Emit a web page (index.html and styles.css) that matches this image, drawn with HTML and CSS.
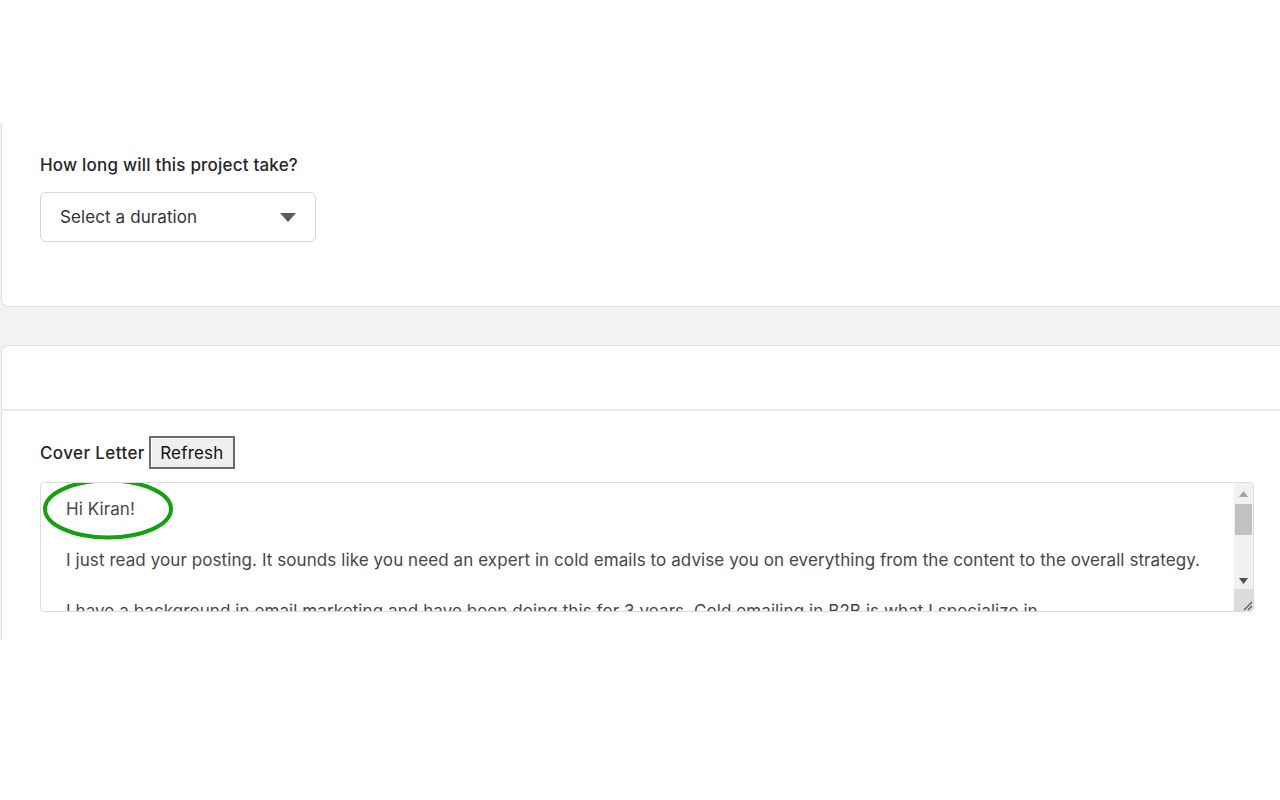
FILE: index.html
```html
<!DOCTYPE html>
<html lang="en">
<head>
<meta charset="utf-8">
<title>Proposal</title>
<link rel="stylesheet" href="styles.css">
</head>
<body>
<div class="top-space"></div>
<div class="viewport">
  <section class="card card-duration">
    <div class="field-label">How long will this project take?</div>
    <div class="select">
      <span class="select-text">Select a duration</span>
      <svg class="caret" width="18" height="11" viewBox="0 0 18 11"><path d="M1 1h16L9 10z" fill="#5c5c5c"/></svg>
    </div>
  </section>
  <section class="card card-letter">
    <div class="card-header"></div>
    <div class="card-body">
      <div class="letter-row">
        <span class="field-label inline">Cover Letter</span>
        <button class="refresh" type="button">Refresh</button>
      </div>
      <div class="textarea">
        <div class="ta-content">
          <p>Hi Kiran!</p>
          <p>&nbsp;</p>
          <p>I just read your posting. It sounds like you need an expert in cold emails to advise you on everything from the content to the overall strategy.</p>
          <p>&nbsp;</p>
          <p>I have a background in email marketing and have been doing this for 3 years. Cold emailing in B2B is what I specialize in.</p>
        </div>
        <div class="scrollbar">
          <div class="sb-btn"><svg width="9" height="6" viewBox="0 0 9 6"><path d="M0 6L4.5 0L9 6z" fill="#a3a3a3"/></svg></div>
          <div class="sb-track"><div class="sb-thumb"></div></div>
          <div class="sb-btn"><svg width="9" height="6" viewBox="0 0 9 6"><path d="M0 0h9L4.5 6z" fill="#505050"/></svg></div>
          <div class="sb-resizer"><svg width="12" height="12" viewBox="0 0 12 12"><path d="M11 3L3 11M11 7L7 11" stroke="#555" stroke-width="1.2"/></svg></div>
        </div>
        <svg class="circle" width="134" height="64" viewBox="0 0 134 64"><ellipse cx="67" cy="32" rx="63" ry="28.5" fill="none" stroke="#13a10e" stroke-width="4"/></svg>
      </div>
    </div>
  </section>
</div>
</body>
</html>
```
FILE: styles.css
```css
* { box-sizing: border-box; }
html, body { margin: 0; padding: 0; background: #fff; }
body {
  font-family: Inter, "Noto Sans", "Liberation Sans", sans-serif;
  color: #222;
}
.top-space { height: 123px; }
.viewport {
  height: 517px;
  overflow: hidden;
  background: #f1f2f4;
  padding-left: 1px;
}
.card {
  width: 1320px;
  background: #fff;
  border: 1px solid #e1e2e4;
}
.card-duration {
  border-top: none;
  border-radius: 0 0 8px 8px;
  padding: 31px 0 64px 38px;
}
.field-label {
  font-size: 17px;
  line-height: 22px;
  font-weight: 500;
  color: #262626;
  letter-spacing: 0.2px;
}
.field-label.inline { letter-spacing: 0.4px; }
.select {
  margin-top: 16px;
  width: 276px;
  height: 50px;
  border: 1px solid #d6d6d6;
  border-radius: 6px;
  display: flex;
  align-items: center;
  justify-content: space-between;
  padding: 0 18px 0 19px;
}
.select-text { font-size: 17px; color: #333; letter-spacing: 0.1px; }
.caret { display: block; }
.card-letter {
  margin-top: 38px;
  border-radius: 8px 8px 0 0;
  border-bottom: none;
  height: 400px;
}
.card-header {
  height: 65px;
  border-bottom: 2px solid #e8e9eb;
}
.card-body { padding: 25px 0 0 38px; }
.letter-row {
  display: flex;
  align-items: center;
  gap: 4px;
  height: 33px;
}
.refresh {
  font-family: inherit;
  font-size: 17px;
  color: #111;
  background: #efefef;
  border: 2px solid #6b6b6b;
  border-radius: 0;
  height: 33px;
  width: 86px;
  padding: 0;
  letter-spacing: 0.2px;
  box-shadow: inset 1px 1px 0 #fff;
}
.textarea {
  position: relative;
  margin-top: 13px;
  width: 1214px;
  height: 130px;
  border: 1px solid #dcdcdc;
  border-radius: 4px;
  display: flex;
  overflow: hidden;
}
.ta-content {
  flex: 1;
  overflow: hidden;
  padding: 14px 20px 0 25px;
  font-size: 17px;
  line-height: 25.5px;
  color: #474747;
  letter-spacing: 0.08px;
}
.ta-content p { margin: 0; white-space: nowrap; }
.scrollbar {
  width: 19px;
  background: #f1f1f1;
  display: flex;
  flex-direction: column;
  padding-top: 2px;
}
.sb-btn {
  height: 17px;
  display: flex;
  align-items: center;
  justify-content: center;
}
.sb-track { flex: 1; padding: 2px 1px; }
.sb-thumb { height: 31px; background: #c1c1c1; }
.sb-resizer {
  height: 22px;
  background: #dcdcdc;
  display: flex;
  align-items: flex-end;
  justify-content: flex-end;
}
.sb-resizer svg { display: block; }
.circle {
  position: absolute;
  left: 0;
  top: -6px;
}
```
